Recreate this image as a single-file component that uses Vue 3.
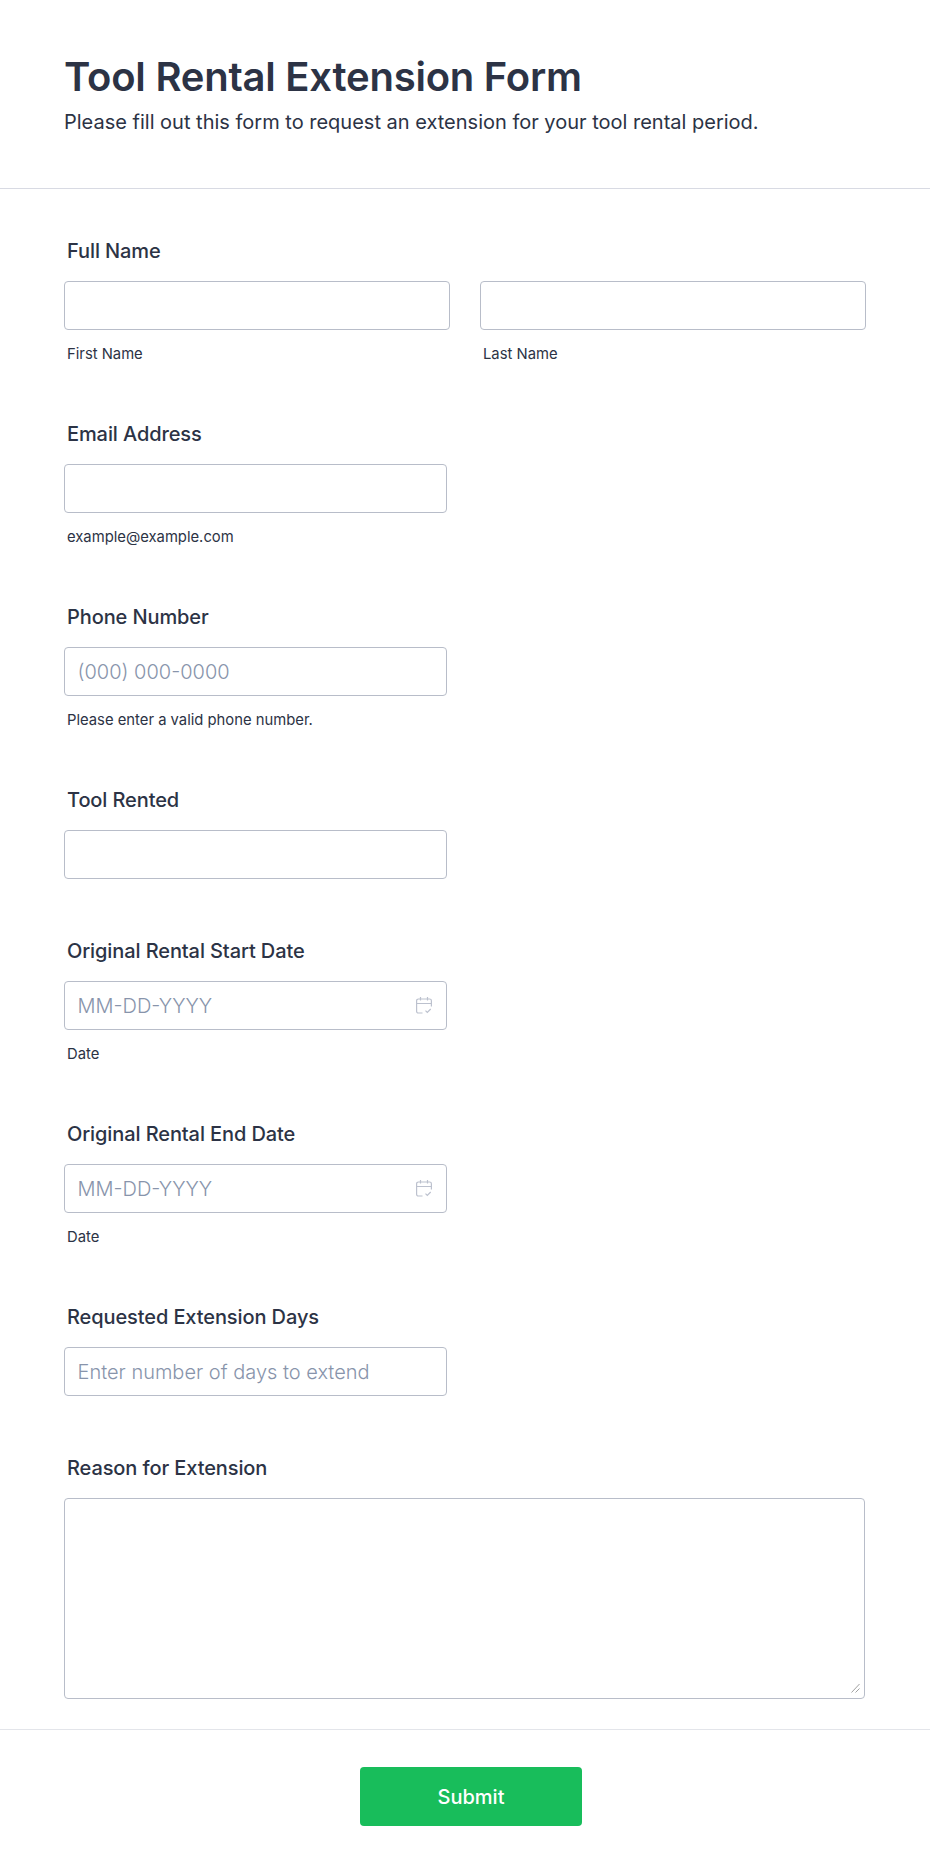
<script setup>
const singles = [
  { label: 'Email Address', sub: 'example@example.com', placeholder: '' },
  { label: 'Phone Number', sub: 'Please enter a valid phone number.', placeholder: '(000) 000-0000' },
  { label: 'Tool Rented', sub: '', placeholder: '' },
  { label: 'Original Rental Start Date', sub: 'Date', placeholder: 'MM-DD-YYYY', date: true },
  { label: 'Original Rental End Date', sub: 'Date', placeholder: 'MM-DD-YYYY', date: true },
  { label: 'Requested Extension Days', sub: '', placeholder: 'Enter number of days to extend' },
]
</script>

<template>
  <div class="page">
    <header class="head">
      <h1 class="title">Tool Rental Extension Form</h1>
      <p class="subtitle">Please fill out this form to request an extension for your tool rental period.</p>
    </header>
    <form class="form" @submit.prevent>
      <div class="field">
        <label class="label">Full Name</label>
        <div class="name-row">
          <div class="name-col">
            <input class="input" type="text" />
            <div class="sub">First Name</div>
          </div>
          <div class="name-col">
            <input class="input" type="text" />
            <div class="sub">Last Name</div>
          </div>
        </div>
      </div>
      <div v-for="f in singles" :key="f.label" class="field">
        <label class="label">{{ f.label }}</label>
        <div class="single">
          <input class="input" type="text" :placeholder="f.placeholder" />
          <svg v-if="f.date" class="cal" width="16" height="17" viewBox="0 0 16 17" fill="none" stroke="#bcc1ce" stroke-width="1.2">
            <path d="M6.5 16H2.4A1.8 1.8 0 0 1 .6 14.2V3.8A1.8 1.8 0 0 1 2.4 2h11.2a1.8 1.8 0 0 1 1.8 1.8V9.5" />
            <path d="M.6 6.5h14.8M4.5 0v3.5M11.5 0v3.5" />
            <path d="M9.5 13.6l1.8 1.8 3.4-3.4" />
          </svg>
        </div>
        <div v-if="f.sub" class="sub">{{ f.sub }}</div>
      </div>
      <div class="field last">
        <label class="label">Reason for Extension</label>
        <div class="area-wrap">
          <textarea class="area"></textarea>
          <svg class="grip" width="9" height="10" viewBox="0 0 9 10" fill="none" stroke="#a0a0a0" stroke-width="1">
            <path d="M.5 9.5L8.5 1M4.5 9.5L8.5 5.5" />
          </svg>
        </div>
      </div>
    </form>
    <footer class="foot">
      <button class="submit" type="submit">Submit</button>
    </footer>
  </div>
</template>

<style>
html, body { margin: 0; background: #fff; }
</style>

<style scoped>
.page {
  width: 930px;
  height: 1876px;
  box-sizing: border-box;
  background: #fff;
  font-family: Inter, "Noto Sans", sans-serif;
  color: #2c3345;
}
.head {
  height: 189px;
  box-sizing: border-box;
  padding: 53px 64px 0;
  border-bottom: 1px solid #d8dae3;
}
.title {
  margin: 0;
  font-size: 40px;
  line-height: 48px;
  font-weight: 600;
  letter-spacing: -0.23px;
}
.subtitle {
  margin: 9px 0 0;
  font-size: 20px;
  line-height: 24px;
  font-weight: 400;
}
.form { padding: 50px 64px 0; }
.field { margin-bottom: 60px; }
.field.last { margin-bottom: 0; }
.label {
  display: block;
  margin: 0 0 18px 3px;
  font-size: 20px;
  line-height: 24px;
  font-weight: 450;
  letter-spacing: -0.1px;
}
.name-row { display: flex; gap: 30px; width: 802px; }
.name-col { width: 386px; }
.single { position: relative; width: 383px; }
.input {
  display: block;
  width: 100%;
  height: 49px;
  box-sizing: border-box;
  padding: 0 12.5px;
  border: 1px solid #b8bdc9;
  border-radius: 4px;
  background: #fff;
  outline: none;
  font-family: inherit;
  font-size: 20px;
  font-weight: 300;
  color: #2c3345;
}
.input::placeholder { color: #8894ab; opacity: 1; }
.cal { position: absolute; right: 15px; top: 16px; }
.sub {
  margin: 16px 0 0 3px;
  font-size: 14.8px;
  line-height: 16px;
  color: #2c3345;
}
.area-wrap { position: relative; width: 801px; }
.area {
  display: block;
  width: 100%;
  height: 201px;
  box-sizing: border-box;
  padding: 10px 13px;
  border: 1px solid #b8bdc9;
  border-radius: 4px;
  background: #fff;
  outline: none;
  resize: none;
  font-family: inherit;
  font-size: 20px;
}
.grip { position: absolute; right: 5px; bottom: 6px; }
.foot {
  margin-top: 30px;
  border-top: 1px solid #e3e5ea;
  padding-top: 37px;
  display: flex;
  justify-content: center;
}
.submit {
  width: 222px;
  height: 59px;
  margin-left: 12px;
  border: none;
  border-radius: 4px;
  background: #18bd5b;
  color: #fff;
  font-family: inherit;
  font-size: 20px;
  font-weight: 500;
}
</style>
